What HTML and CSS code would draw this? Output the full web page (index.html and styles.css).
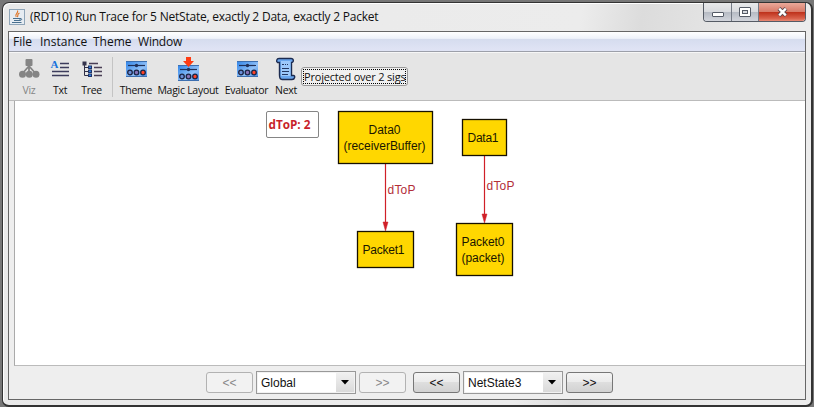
FILE: index.html
```html
<!DOCTYPE html>
<html lang="en">
<head>
<meta charset="utf-8">
<title>Run Trace</title>
<link rel="stylesheet" href="styles.css">
</head>
<body>
<svg width="0" height="0" class="defs">
  <defs>
    <linearGradient id="blue" x1="0" y1="0" x2="1" y2="1"><stop offset="0" stop-color="#2f84e8"/><stop offset=".6" stop-color="#8fc0f8"/><stop offset="1" stop-color="#4a90e6"/></linearGradient>
    <g id="panel">
      <rect x="0" y="0" width="21" height="16" fill="url(#blue)"/>
      <path d="M0 .5H21M0 15.5H21" stroke="#3d6fb0"/>
      <path d="M2 4.5H19" stroke="#203058" stroke-width="1.2"/>
      <circle cx="10.500" cy="4.500" r="1.700" fill="#203058"/>
      <circle cx="4" cy="11.500" r="2.300" fill="#6b8fd8" stroke="#1c2444" stroke-width="1.300"/>
      <circle cx="10.500" cy="11.500" r="2.300" fill="#8a74b8" stroke="#1c2444" stroke-width="1.300"/>
      <circle cx="17" cy="11.500" r="2.300" fill="#ff4326" stroke="#1c2444" stroke-width="1.300"/>
    </g>
  </defs>
</svg>
<div class="window">
  <header class="titlebar">
    <svg class="java" width="16" height="16" viewBox="0 0 16 16">
      <rect x=".5" y=".5" width="15" height="15" fill="#e6ecf2" stroke="#8fa5b8"/>
      <path d="M8.500 1.500C10 4 5 4.800 7.200 8M10.500 4C7.500 5.200 9.800 6.200 8.300 8" fill="none" stroke="#e0782c" stroke-width="1.200"/>
      <path d="M4 9.500H11V11.500H5M11 9.500C13.500 9 13 11.500 11 11.500M3 13.500H12.500" fill="none" stroke="#48708f"/>
    </svg>
    <h1 class="title">(RDT10) Run Trace for 5 NetState, exactly 2 Data, exactly 2 Packet</h1>
    <div class="controls">
      <span class="ctl min"><svg width="28" height="18"><rect x="8.500" y="9.500" width="11" height="4" rx=".5" fill="#fff" stroke="#555b66"/></svg></span>
      <span class="ctl max"><svg width="27" height="18"><rect x="7.500" y="4.500" width="11" height="9" rx=".5" fill="#fff" stroke="#555b66"/><rect x="10.500" y="7.500" width="5" height="3" fill="#d8dbe0" stroke="#555b66"/></svg></span>
      <span class="ctl close"><svg width="46" height="18"><path d="M20 5.500L27 12.500M27 5.500L20 12.500" stroke="#5c4a50" stroke-width="4.200"/><path d="M20.200 5.700L26.800 12.300M26.800 5.700L20.200 12.300" stroke="#fff" stroke-width="2.400"/></svg></span>
    </div>
  </header>
  <div class="client">
    <nav class="menu"><span class="m1">File</span><span class="m2">Instance</span><span class="m3">Theme</span><span class="m4">Window</span></nav>
    <div class="toolbar">
      <div class="tool viz"><svg width="24" height="24"><path d="M12 6V11M12 9L5 17M12 9L19 17M12 9V17" stroke="#858585" stroke-width="1.800"/><rect x="8.500" y="2" width="7" height="7" rx="1" fill="#858585"/><circle cx="5.500" cy="17.300" r="3.500" fill="#858585"/><circle cx="12.300" cy="17.300" r="3.500" fill="#858585"/><circle cx="19" cy="17.300" r="3.500" fill="#858585"/></svg><span>Viz</span></div>
      <div class="tool txt"><svg width="24" height="24"><text x="2.500" y="11" class="glyph">A</text><path d="M12 6.500H21M12 10.500H21M4 14.500H21M4 18.500H21" stroke="#3c3c5c" stroke-width="1.600"/></svg><span>Txt</span></div>
      <div class="tool tree"><svg width="24" height="24"><path d="M4.500 5V18.500H9M4.500 10.500H9M4.500 14.500H9" fill="none" stroke="#303048"/><rect x="2.500" y="4.500" width="4" height="4" fill="#34344c"/><path d="M9 6.500H18M14 10.500H22M14 14.500H22M14 18.500H22" stroke="#4a3f55" stroke-width="1.600"/><g fill="#3280e0" stroke="#203468"><rect x="8.500" y="9" width="3" height="2.500"/><rect x="8.500" y="13" width="3" height="2.500"/><rect x="8.500" y="17" width="3" height="2.500"/></g></svg><span>Tree</span></div>
      <div class="sep"></div>
      <div class="tool theme"><svg width="24" height="24"><use href="#panel" x="2" y="4"/></svg><span>Theme</span></div>
      <div class="tool magic"><svg width="24" height="24"><use href="#panel" x="2" y="8"/><path d="M10 0H15V4H18L12.500 10L7 4H10Z" fill="#ff3b12"/></svg><span>Magic Layout</span></div>
      <div class="tool eval"><svg width="24" height="24"><use href="#panel" x="2" y="4"/></svg><span>Evaluator</span></div>
      <div class="tool next"><svg width="24" height="24"><path d="M5 1.500H17C20 1.500 20 5.500 17.500 5.500V18.500H19.500C21.500 18.500 21 22.500 18 22.500H8C5.500 22.500 5.500 19 5.500 18V5.500H3.500C2 4.500 2.500 1.500 5 1.500Z" fill="#6aa7ef" stroke="#1c2b50" stroke-width="1.400"/><path d="M7 4H16.500V19H7Z" fill="#9cc8fb"/><path d="M8 7.500H10M11 7.500H12M13 7.500H14M8 11.500H15M8 14.500H15M8 17.500H14" stroke="#243762" stroke-width="1.100"/></svg><span>Next</span></div>
      <button class="projected"><span>Projected over 2 sigs</span></button>
    </div>
    <main class="canvas">
      <svg width="790" height="264" viewBox="15 101 790 264">
        <rect x="266.500" y="111.500" width="52" height="26" rx="1.500" fill="#fff" stroke="#858585"/>
        <text class="legend" x="268.500" y="129" textLength="42" lengthAdjust="spacingAndGlyphs">dToP: 2</text>
        <g stroke="#d02028" stroke-width="1.200"><path d="M385.500 163V224M484.500 155V216"/></g>
        <path d="M383 222H388L385.500 231ZM482 214H487L484.500 223Z" fill="#d02028" stroke="#d02028" stroke-width=".5"/>
        <g fill="#ffd700" stroke="#171000" stroke-width="1.300">
          <rect x="338.500" y="111.500" width="94" height="52"/>
          <rect x="462.500" y="119.500" width="44" height="36"/>
          <rect x="357.500" y="231.500" width="56" height="36"/>
          <rect x="456.500" y="223.500" width="56" height="52"/>
        </g>
        <g class="edge">
          <text x="387.500" y="194" textLength="28">dToP</text>
          <text x="486.500" y="190" textLength="28">dToP</text>
        </g>
        <g class="node">
          <text x="368.500" y="134" textLength="32">Data0</text>
          <text x="343.500" y="150" textLength="82">(receiverBuffer)</text>
          <text x="467.500" y="142" textLength="31">Data1</text>
          <text x="362.500" y="254" textLength="42">Packet1</text>
          <text x="461.500" y="246" textLength="43">Packet0</text>
          <text x="461.500" y="262" textLength="43">(packet)</text>
        </g>
      </svg>
    </main>
    <footer class="nav">
      <button class="step off">&lt;&lt;</button>
      <div class="combo"><span>Global</span><i><svg width="9" height="5"><path d="M0 0H8L4 4.500Z" fill="#000"/></svg></i></div>
      <button class="step off">&gt;&gt;</button>
      <button class="step second">&lt;&lt;</button>
      <div class="combo"><span>NetState3</span><i><svg width="9" height="5"><path d="M0 0H8L4 4.500Z" fill="#000"/></svg></i></div>
      <button class="step">&gt;&gt;</button>
    </footer>
  </div>
</div>
</body>
</html>
```
FILE: styles.css
```css
* { box-sizing: border-box; }
body {
  margin: 0;
  width: 814px;
  height: 407px;
  overflow: hidden;
  padding: 2px;
  background: #777;
  font-family: "Open Sans", "Noto Sans", sans-serif;
  color: #111;
}
.defs { display: block; position: absolute; }
.window {
  width: 811px;
  height: 405px;
  border: 1px solid #333;
  border-bottom-width: 2px;
  border-right-width: 2px;
  border-radius: 7px;
  padding: 0 5px 5px 5px;
  background: linear-gradient(100deg, #e9e9e9 0, #ececec 66%, #dcdcdc 73%, #ececec 90%);
  box-shadow: inset 1px 1px 0 #fff;
}
.titlebar { height: 28px; display: flex; align-items: flex-start; }
.java { margin: 6px 5px 0 1px; flex: none; }
.title {
  margin: 5px 0 0;
  font-size: 12px;
  line-height: 18px;
  font-weight: 400;
  letter-spacing: -0.22px;
  white-space: nowrap;
}
.controls {
  display: flex;
  margin-left: auto;
  height: 19px;
  border: 1px solid #555b65;
  border-top: 0;
  border-radius: 0 0 4px 4px;
  overflow: hidden;
}
.ctl { background: linear-gradient(#e8e9eb, #d8dade 48%, #b5bac3 50%, #d2d5dc); border-right: 1px solid #747a85; }
.ctl svg { display: block; }
.min { width: 28px; }
.max { width: 27px; }
.close { width: 46px; border: 0; background: linear-gradient(#eaa99a, #d87b69 48%, #bd2f19 50%, #d8604a 85%, #e88a75); }
.client { height: 369px; border: 1px solid #666; background: #eee; }
.menu {
  display: flex;
  height: 20px;
  padding-left: 4px;
  background: linear-gradient(#fff, #eef2fa 34%, #d5dcee 36%, #dfe3f4 90%);
  border-bottom: 1px solid #9c9fa9;
  font-size: 12px;
  line-height: 20px;
}
.m1 { width: 27px; }
.m2 { width: 53px; }
.m3 { width: 45px; }
.m4 { letter-spacing: -0.2px; }
.toolbar { display: flex; height: 49px; padding: 4px 0 0 5px; background: #e5e5e5; border-top: 1px solid #f6f6f6; border-bottom: 1px solid #bbb; }
.tool { display: flex; flex-direction: column; align-items: center; font-size: 10.5px; line-height: 15px; white-space: nowrap; font-family: "Open Sans", sans-serif; }
.tool svg { display: block; flex: none; margin-bottom: 2px; }
.viz { width: 30px; color: #858585; }
.txt { width: 32px; }
.tree { width: 31px; }
.theme { width: 36px; }
.magic { width: 68px; }
.eval { width: 49px; }
.next { width: 30px; }
.glyph { font: bold 11px "Liberation Serif", serif; fill: #1972dc; }
.sep { width: 1px; height: 40px; margin: 0 5px; background: #c4c4c4; }
.tool span { letter-spacing: -0.28px; }
.projected {
  width: 107px;
  height: 19px;
  margin: 10px 0 0;
  padding: 1px;
  border: 1px solid #999;
  border-radius: 3px;
  background: #f0f0f0;
  color: #111;
  font: 11px/13px "Open Sans", sans-serif;
  letter-spacing: -0.2px;
  white-space: nowrap;
}
.projected span { display: block; height: 15px; border: 1px dotted #000; }
.canvas { height: 265px; margin-left: 5px; background: #fff; border-left: 1px solid #aaa; border-bottom: 1px solid #bbb; }
.canvas svg { display: block; width: 790px; }
.canvas { overflow: hidden; }
.node, .edge { font: 12px "Liberation Sans", sans-serif; fill: #1b1600; }
.edge { fill: #b32e38; }
.legend { font: bold 12px "Open Sans", sans-serif; fill: #c81f2a; }
.nav { display: flex; gap: 3px; padding: 5px 0 0 197px; align-items: center; font-family: "Liberation Sans", sans-serif; }
.step { width: 47px; height: 21px; padding: 0; border: 1px solid #777; border-radius: 3px; background: linear-gradient(#f4f4f4, #ebebeb 48%, #dedede 50%, #d2d2d2); font: 12px "Liberation Sans", sans-serif; color: #111; }
.off { border-color: #b2b2b2; background: #f2f2f2; color: #888; }
.second { margin-left: 4px; }
.combo { display: flex; width: 100px; height: 23px; border: 1px solid #999; padding: 1px; background: #f2f2f2; font-size: 12px; }
.combo span { flex: 1; background: #fff; padding-left: 3px; line-height: 20px; }
.combo i { width: 18px; display: flex; align-items: center; justify-content: center; background: linear-gradient(#f0f0f0, #dadada); }
```
